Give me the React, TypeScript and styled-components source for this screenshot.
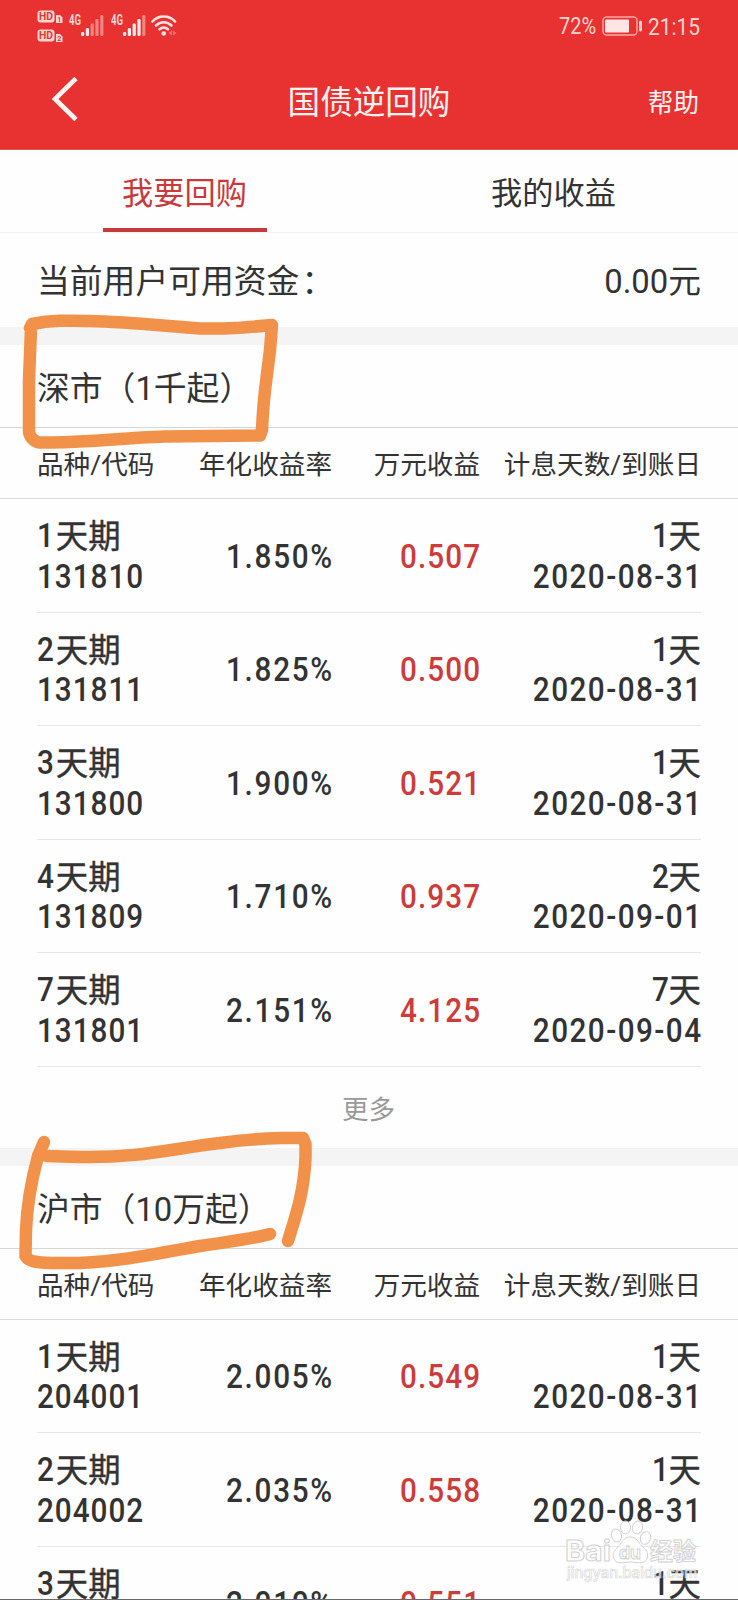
import React from 'react';
import styled, { createGlobalStyle } from 'styled-components';

const GlobalStyle = createGlobalStyle`
  * { box-sizing: border-box; }
  body {
    margin: 0;
    background: #fefefe;
    color: #333;
    font-family: Roboto, "Noto Sans CJK SC", sans-serif;
  }
`;

const Screen = styled.div`
  position: relative;
  width: 738px;
  height: 1600px;
  overflow: hidden;
  background: #fefefe;
  border-bottom: 1px solid #68686a;
`;

const Header = styled.header`
  height: 150px;
  background: #e83131;
  color: #fff3f1;
  border-bottom: 1px solid #dd5a57;
`;

const StatusBar = styled.div`
  display: flex;
  align-items: center;
  justify-content: space-between;
  height: 52px;
  padding: 0 38px 0 37px;
  color: #fbd5d2;
`;

const StatusGroup = styled.div`
  display: flex;
  align-items: center;
`;

const Condensed = styled.span<{ $width: number; $size: number }>`
  display: block;
  width: ${(p) => p.$width}px;
  font-size: ${(p) => p.$size}px;
  line-height: 50px;
  padding-top: 2px;
  white-space: nowrap;
  transform: scaleX(0.87);
  transform-origin: left center;
`;

const BatteryIcon = styled.svg`
  margin: 0 5px 0 5px;
`;

const NavBar = styled.div`
  display: grid;
  grid-template-columns: 1fr auto 1fr;
  align-items: center;
  height: 97px;
  padding: 4px 39px 0 51px;
`;

const BackIcon = styled.svg`
  margin-top: -7px;
`;

const PageTitle = styled.h1`
  margin: 0 12px 0 0;
  font-size: 32.6px;
  font-weight: 400;
  line-height: 48px;
`;

const Help = styled.span`
  justify-self: end;
  font-size: 25.6px;
  line-height: 48px;
`;

const Tabs = styled.nav`
  display: grid;
  grid-template-columns: 1fr 1fr;
  height: 83px;
  border-bottom: 1px solid #f1f1f1;
`;

const Tab = styled.div<{ $active?: boolean }>`
  justify-self: center;
  width: 164px;
  height: 82px;
  line-height: 87px;
  text-align: center;
  font-size: 31.2px;
  color: ${(p) => (p.$active ? '#c9393b' : '#333')};
  border-bottom: ${(p) => (p.$active ? '4px solid #c9393b' : '0')};
`;

const Balance = styled.div`
  display: flex;
  justify-content: space-between;
  height: 94px;
  padding: 0 37px;
  font-size: 32.8px;
  line-height: 98px;
`;

const Colon = styled.span`
  margin-left: 2px;
`;

const Gap = styled.div`
  height: 18px;
  background: #f4f4f4;
`;

const SectionTitle = styled.h2`
  margin: 0;
  height: 83px;
  padding-left: 37px;
  border-bottom: 1px solid #d6d6d6;
  font-size: 32.8px;
  font-weight: 400;
  line-height: 88px;
`;

const columns = '147px 148px 148px 221px';

const TableHead = styled.div`
  display: grid;
  grid-template-columns: ${columns};
  height: 71px;
  padding: 0 37px;
  border-bottom: 1px solid #dcdcdc;
  font-size: 26.6px;
  line-height: 73px;
  text-align: right;
  white-space: nowrap;

  & > :first-child { text-align: left; }
`;

const Row = styled.div`
  display: grid;
  grid-template-columns: ${columns};
  align-items: center;
  height: 113.5px;
  margin: 0 37px;
  padding-top: 3px;
  border-bottom: 1px solid #e6e6e6;
  font-size: 32.4px;
  line-height: 40.3px;
  white-space: nowrap;
`;

const Cell = styled.div<{ $align?: 'left' | 'right'; $tone?: string }>`
  display: flex;
  flex-direction: column;
  align-items: ${(p) => (p.$align === 'left' ? 'flex-start' : 'flex-end')};
  color: ${(p) => p.$tone ?? '#333'};
`;

const Line = styled.div`
  display: flex;
  height: 40.3px;
`;

const Digits = styled.span<{ $align?: 'left' | 'right'; $spacing?: number }>`
  display: block;
  font-weight: 500;
  font-size: 33px;
  letter-spacing: ${(p) => p.$spacing ?? 1.1}px;
  margin-right: ${(p) => -(p.$spacing ?? 1.1)}px;
  transform: scaleX(0.9);
  transform-origin: ${(p) => p.$align ?? 'right'} center;
`;

const Unit = styled.span`
  line-height: 42px;
  -webkit-text-stroke: 0.4px currentColor;
`;

const More = styled.div`
  height: 81px;
  line-height: 85px;
  padding-right: 1px;
  text-align: center;
  font-size: 26.5px;
  color: #999;
`;

const Marks = styled.svg`
  position: absolute;
  left: 0;
  top: 0;
  pointer-events: none;
`;

type Bond = { term: string; code: string; rate: string; gain: string; days: string; date: string };

const shenzhen: Bond[] = [
  { term: '1', code: '131810', rate: '1.850%', gain: '0.507', days: '1', date: '2020-08-31' },
  { term: '2', code: '131811', rate: '1.825%', gain: '0.500', days: '1', date: '2020-08-31' },
  { term: '3', code: '131800', rate: '1.900%', gain: '0.521', days: '1', date: '2020-08-31' },
  { term: '4', code: '131809', rate: '1.710%', gain: '0.937', days: '2', date: '2020-09-01' },
  { term: '7', code: '131801', rate: '2.151%', gain: '4.125', days: '7', date: '2020-09-04' },
];

const shanghai: Bond[] = [
  { term: '1', code: '204001', rate: '2.005%', gain: '0.549', days: '1', date: '2020-08-31' },
  { term: '2', code: '204002', rate: '2.035%', gain: '0.558', days: '1', date: '2020-08-31' },
  { term: '3', code: '204003', rate: '2.010%', gain: '0.551', days: '1', date: '2020-08-31' },
];

function HdBadge({ y, sim }: { y: number; sim: string }) {
  return (
    <g>
      <rect x="0.5" y={y} width="17" height="12" rx="3" fill="#fbd5d2" />
      <text x="2" y={y + 9.8} fontSize="10.5" fontWeight="700" textLength="14" lengthAdjust="spacingAndGlyphs" fill="#e03a38">HD</text>
      <path d={`M19 ${y + 4.5}h4l2.5 2.5v5.5h-6.5z`} fill="#fbd5d2" />
      <text x="20.3" y={y + 11.5} fontSize="7" fontWeight="700" fill="#e03a38">{sim}</text>
    </g>
  );
}

function Signal({ x, level }: { x: number; level: number }) {
  return (
    <g>
      <text x={x} y="24.5" fontSize="14" fontWeight="700" textLength="12" lengthAdjust="spacingAndGlyphs" fill="#fbd5d2">4G</text>
      {[4, 8, 12.5, 17, 21].map((h, i) => (
        <rect key={h} x={x + 12 + i * 4.8} y={36 - h} width="3.2" height={h} rx="1.2"
          fill={i < level ? '#ffeceb' : '#f28480'} />
      ))}
    </g>
  );
}

function StatusIcons() {
  return (
    <svg width="145" height="52" fontFamily="Roboto, sans-serif">
      <HdBadge y={10.5} sim="1" />
      <HdBadge y={29.5} sim="2" />
      <Signal x={32} level={2} />
      <Signal x={74} level={4} />
      <g fill="none" stroke="#fde3e1" strokeWidth="2.6" strokeLinecap="round">
        <path d="M115.5 21.5c6-6.6 16.5-6.6 22.5 0" />
        <path d="M119 25.5c4.5-4.4 11-4.4 15.5 0" />
        <path d="M122.5 29.3c2.5-2.3 6-2.3 8.500 0" />
      </g>
      <circle cx="126.7" cy="33.5" r="2.3" fill="#fde3e1" />
      <path d="M135 30.5v5l-3.5-2.5zM136 30.5v5l3.500-2.5z" fill="#ee7773" />
    </svg>
  );
}

function BondTable({ title, rows }: { title: string; rows: Bond[] }) {
  return (
    <section>
      <Gap />
      <SectionTitle>{title}</SectionTitle>
      <TableHead>
        <span>品种/代码</span>
        <span>年化收益率</span>
        <span>万元收益</span>
        <span>计息天数/到账日</span>
      </TableHead>
      {rows.map((r) => (
        <Row key={r.code}>
          <Cell $align="left">
            <Line><Digits $align="left">{r.term}</Digits><Unit>天期</Unit></Line>
            <Line><Digits $align="left">{r.code}</Digits></Line>
          </Cell>
          <Cell><Digits $spacing={1.9}>{r.rate}</Digits></Cell>
          <Cell $tone="#cd3b3b"><Digits $spacing={1.2}>{r.gain}</Digits></Cell>
          <Cell>
            <Line><Digits>{r.days}</Digits><Unit>天</Unit></Line>
            <Line><Digits $spacing={1.6}>{r.date}</Digits></Line>
          </Cell>
        </Row>
      ))}
    </section>
  );
}

function Annotations() {
  return (
    <Marks width="738" height="1600" fill="none" strokeLinecap="round" strokeLinejoin="round">
      <g stroke="#f29149" strokeWidth="12.5">
        <path d="M30 328L32 324C52 320 68 320.5 88 321C130 322 165 326 200 328.5C228 329 240 328 272 325L270 350C267 376 263 398 262 430L260 435.5L165 436.5C120 438 95 442 52 442.5H39C34 442 29 436 29 431V380L31 329" />
        <path d="M44 1142L38 1156C31 1182 27 1205 26 1230L25.5 1256C28 1261 35 1262.5 50 1263H80C125 1261 160 1253 200 1246C225 1242 248 1240 270 1234" />
        <path d="M47 1156L80 1157C140 1158 170 1149 220 1143C247 1139 265 1138.5 282 1138H303L305.5 1144V1158C304 1191 297 1212 288 1241" />
      </g>
    </Marks>
  );
}

function Watermark() {
  return (
    <Marks width="738" height="1600" fontFamily='Inter, "Noto Sans CJK SC", sans-serif'>
      <g fill="#fff" fillOpacity="0.65" stroke="#d2d2d2" strokeWidth="1">
        <text x="565" y="1561" fontSize="29" fontWeight="700" textLength="46" lengthAdjust="spacingAndGlyphs">Bai</text>
        <ellipse cx="616.5" cy="1535.5" rx="5" ry="6.5" transform="rotate(-15 616.5 1535.5)" />
        <ellipse cx="625.5" cy="1527.5" rx="5" ry="6.5" />
        <ellipse cx="637.5" cy="1527.5" rx="5" ry="6.5" transform="rotate(12 637.5 1527.5)" />
        <ellipse cx="645.5" cy="1538" rx="5" ry="6.5" transform="rotate(20 645.5 1538)" />
        <path d="M630 1537c-7 0-8 6-12 10s-6 7-4 12c3 6 10 3 16 3s14 3 17-3c2-6-1-9-5-13-4-4-5-9-12-9z" />
        <text x="619" y="1559" fontSize="18" fontWeight="700" textLength="22" lengthAdjust="spacingAndGlyphs">du</text>
        <text x="650" y="1560" fontSize="24" fontWeight="700" textLength="46" lengthAdjust="spacingAndGlyphs">经验</text>
      </g>
      <text x="567" y="1578" fontSize="15.5" fontWeight="500" textLength="130" lengthAdjust="spacingAndGlyphs"
        fill="#fff" fillOpacity="0.6" stroke="#d9d9d9" strokeWidth="0.7">jingyan.baidu.com</text>
    </Marks>
  );
}

export default function App() {
  return (
    <>
      <GlobalStyle />
      <Screen>
        <Header>
          <StatusBar>
            <StatusIcons />
            <StatusGroup>
              <Condensed $width={38} $size={23}>72%</Condensed>
              <BatteryIcon width="41" height="20" viewBox="0 0 41 20">
                <rect x="1" y="1" width="34" height="18" rx="3.5" fill="none" stroke="#f7aaa6" strokeWidth="1.4" />
                <rect x="3" y="3.5" width="24" height="13" rx="1" fill="#ffe6e4" />
                <rect x="37" y="4.5" width="3" height="11" rx="1.5" fill="#fbd0cd" />
              </BatteryIcon>
              <Condensed $width={52} $size={24}>21:15</Condensed>
            </StatusGroup>
          </StatusBar>
          <NavBar>
            <BackIcon width="28" height="46" viewBox="0 0 28 46" fill="none" stroke="#fff5f3" strokeWidth="4.6">
              <path d="M25 2.5L4 23L25 43.5" />
            </BackIcon>
            <PageTitle>国债逆回购</PageTitle>
            <Help>帮助</Help>
          </NavBar>
        </Header>
        <Tabs>
          <Tab $active>我要回购</Tab>
          <Tab>我的收益</Tab>
        </Tabs>
        <Balance>
          <span>当前用户可用资金<Colon>：</Colon></span>
          <span>0.00元</span>
        </Balance>
        <BondTable title="深市（1千起）" rows={shenzhen} />
        <More>更多</More>
        <BondTable title="沪市（10万起）" rows={shanghai} />
        <Annotations />
        <Watermark />
      </Screen>
    </>
  );
}
